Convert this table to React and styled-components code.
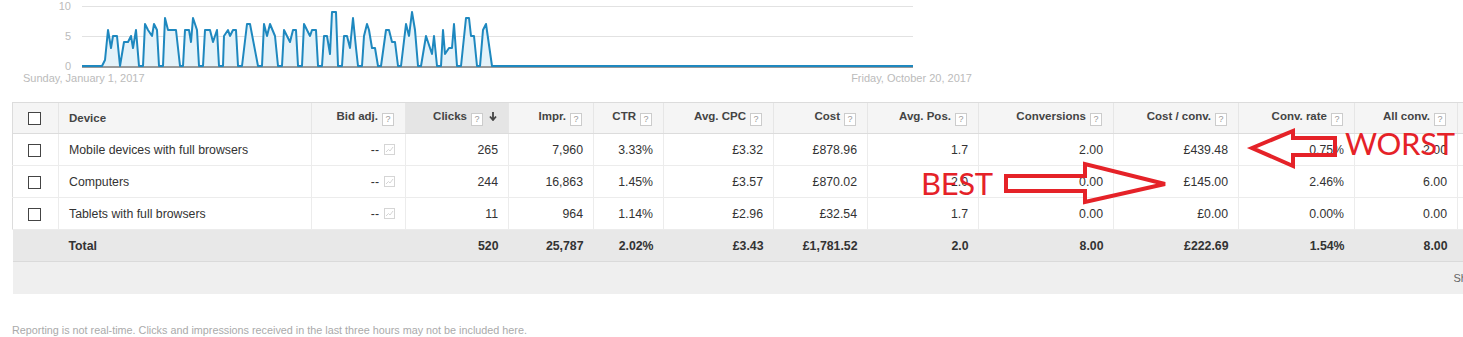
import React from 'react';
import styled, { createGlobalStyle } from 'styled-components';

const GlobalStyle = createGlobalStyle`
	html, body {
		margin: 0;
		padding: 0;
		background: #fff;
		overflow: hidden;
	}
	body {
		font-family: 'Liberation Sans', Arial, sans-serif;
		color: #333;
	}
`;

const Page = styled.div`
	position: relative;
	width: 1463px;
	min-height: 337px;
	display: flex;
	flex-direction: column;
	& > * {
		flex-shrink: 0;
	}
`;

const ChartSvg = styled.svg`
	display: block;
	width: 980px;
	height: 72px;
	& text {
		font-family: 'Liberation Sans', Arial, sans-serif;
		font-size: 11px;
		fill: #bbb;
	}
`;

const DateRow = styled.div`
	display: flex;
	justify-content: space-between;
	width: 949px;
	padding-left: 23px;
	font-size: 11px;
	line-height: 12px;
	color: #bbb;
`;

const Table = styled.table`
	margin: 18px 0 0 12px;
	border-collapse: collapse;
	table-layout: fixed;
	width: 1551px;
	font-size: 12.3px;
`;

const HeadCell = styled.th`
	height: 30px;
	padding: 0 11px 0 10px;
	background: ${props => (props.$sorted ? '#e5e5e5' : '#f5f5f5')};
	border-top: 1px solid #dcdcdc;
	border-bottom: 1px solid #dcdcdc;
	border-left: 1px solid #e6e6e6;
	text-align: ${props => props.$align || 'right'};
	font-size: 11.5px;
	font-weight: bold;
	color: #444;
	white-space: nowrap;
	&:first-child {
		border-left: 1px solid #dcdcdc;
		text-align: center;
		padding: 0;
	}
`;

const Help = styled.span`
	display: inline-block;
	width: 10px;
	height: 11px;
	margin-left: 4px;
	border: 1px solid #ccc;
	background: #fff;
	font-size: 9px;
	font-weight: normal;
	line-height: 11px;
	text-align: center;
	color: #999;
	vertical-align: -2px;
`;

const SortArrow = styled.svg`
	width: 8px;
	height: 9px;
	margin-left: 6px;
	vertical-align: -1px;
`;

const Cell = styled.td`
	height: 31px;
	padding: 0 10px;
	border-bottom: 1px solid #ececec;
	border-left: 1px solid #ececec;
	text-align: ${props => props.$align || 'right'};
	color: #333;
	white-space: nowrap;
	&:first-child {
		border-left: 1px solid #dcdcdc;
		text-align: center;
		padding: 0;
	}
`;

const TotalCell = styled.td`
	height: 31px;
	padding: 0 10px;
	background: #e8e8e8;
	border-bottom: 1px solid #dadada;
	text-align: ${props => props.$align || 'right'};
	font-weight: bold;
	color: #333;
	white-space: nowrap;
`;

const FooterCell = styled.td`
	height: 32px;
	padding: 0 0 0 1441px;
	background: #efefef;
	font-size: 11px;
	color: #666;
	white-space: nowrap;
	text-align: left;
`;

const Check = styled.span`
	display: inline-block;
	width: 11px;
	height: 11px;
	border: 1px solid #444;
	background: #fff;
	vertical-align: middle;
	margin-right: 3px;
`;

const BidIcon = styled.svg`
	width: 11px;
	height: 11px;
	margin-left: 5px;
	vertical-align: -1px;
`;

const Note = styled.div`
	margin: 30px 0 0 12px;
	font-size: 10.8px;
	color: #aaa;
`;

const Mark = styled.span`
	position: absolute;
	left: ${props => props.$x}px;
	top: ${props => props.$y}px;
	font-family: Lato, 'Liberation Sans', sans-serif;
	font-size: 31px;
	line-height: 1;
	color: #e52228;
	letter-spacing: -0.3px;
`;

const Overlay = styled.svg`
	position: absolute;
	left: 0;
	top: 0;
	width: 1463px;
	height: 337px;
	pointer-events: none;
`;

const points = [
	[82, 0], [102, 0], [105, 1], [108, 6], [111, 3], [113, 5], [117, 5], [120, 0], [124, 4], [128, 4],
	[131, 5], [133, 3], [136, 6], [139, 0], [143, 0], [145, 7], [148, 6], [152, 5], [154, 7], [157, 6],
	[159, 0], [163, 0], [165, 8], [168, 6], [176, 6], [180, 0], [183, 0], [185, 6], [189, 6], [191, 4],
	[193, 8], [197, 6], [199, 0], [203, 0], [205, 6], [210, 6], [213, 4], [217, 6], [219, 0], [223, 0],
	[224, 5], [228, 6], [230, 5], [233, 6], [236, 6], [238, 0], [242, 0], [247, 7], [250, 7], [258, 0],
	[262, 0], [264, 7], [267, 5], [270, 7], [275, 5], [278, 0], [282, 0], [284, 6], [287, 5], [290, 4],
	[293, 6], [296, 6], [298, 0], [302, 0], [304, 7], [307, 6], [310, 5], [312, 6], [316, 6], [318, 0],
	[322, 0], [324, 5], [327, 5], [330, 2], [332, 9], [336, 9], [338, 0], [342, 0], [344, 5], [347, 5],
	[350, 3], [353, 8], [356, 3], [358, 0], [362, 0], [364, 5], [367, 7], [369, 6], [372, 3], [375, 3],
	[378, 0], [381, 0], [386, 6], [389, 6], [392, 4], [395, 4], [398, 0], [401, 0], [406, 7], [409, 5],
	[412, 9], [415, 6], [418, 0], [421, 0], [426, 5], [430, 3], [432, 2], [434, 5], [437, 0], [441, 0],
	[443, 6], [445, 2], [449, 3], [452, 3], [454, 7], [457, 0], [461, 0], [466, 8], [469, 8], [471, 5],
	[474, 5], [477, 0], [480, 0], [483, 6], [486, 7], [492, 0], [913, 0],
];

const toY = v => 66 - v * 6;
const linePath = points.map(([x, v], i) => `${i ? 'L' : 'M'}${x},${toY(v)}`).join(' ');

const Chart = () => (
	<ChartSvg viewBox="0 0 980 72">
		<line x1="82" y1="6.5" x2="913" y2="6.5" stroke="#e2e2e2" />
		<line x1="82" y1="36.5" x2="913" y2="36.5" stroke="#e2e2e2" />
		<line x1="82" y1="67" x2="913" y2="67" stroke="#999" strokeWidth="2" />
		<text x="71" y="10" textAnchor="end">10</text>
		<text x="71" y="40" textAnchor="end">5</text>
		<text x="71" y="70" textAnchor="end">0</text>
		<path d={`${linePath} Z`} fill="#e4f2f9" />
		<path d={linePath} fill="none" stroke="#1e88bf" strokeWidth="2" strokeLinejoin="round" />
	</ChartSvg>
);

const columns = [
	{ label: '', width: 46 },
	{ label: 'Device', width: 253, align: 'left', help: false },
	{ label: 'Bid adj.', width: 94 },
	{ label: 'Clicks', width: 103, sorted: true },
	{ label: 'Impr.', width: 85 },
	{ label: 'CTR', width: 70 },
	{ label: 'Avg. CPC', width: 110 },
	{ label: 'Cost', width: 94 },
	{ label: 'Avg. Pos.', width: 111 },
	{ label: 'Conversions', width: 135 },
	{ label: 'Cost / conv.', width: 125 },
	{ label: 'Conv. rate', width: 116 },
	{ label: 'All conv.', width: 103 },
	{ label: '', width: 106 },
];

const rows = [
	['Mobile devices with full browsers', '265', '7,960', '3.33%', '£3.32', '£878.96', '1.7', '2.00', '£439.48', '0.75%', '2.00'],
	['Computers', '244', '16,863', '1.45%', '£3.57', '£870.02', '2.0', '0.00', '£145.00', '2.46%', '6.00'],
	['Tablets with full browsers', '11', '964', '1.14%', '£2.96', '£32.54', '1.7', '0.00', '£0.00', '0.00%', '0.00'],
];

const totals = ['520', '25,787', '2.02%', '£3.43', '£1,781.52', '2.0', '8.00', '£222.69', '1.54%', '8.00'];

const BidAdj = () => (
	<>
		--
		<BidIcon viewBox="0 0 11 11">
			<rect x="0.5" y="0.5" width="10" height="10" fill="none" stroke="#d5d5d5" />
			<polyline points="2,8 4.5,5.5 6,7 9,3" fill="none" stroke="#d5d5d5" />
		</BidIcon>
	</>
);

const App = () => (
	<Page>
		<GlobalStyle />
		<Chart />
		<DateRow>
			<span>Sunday, January 1, 2017</span>
			<span>Friday, October 20, 2017</span>
		</DateRow>
		<Table>
			<colgroup>
				{columns.map((c, i) => (
					<col key={i} style={{ width: c.width }} />
				))}
			</colgroup>
			<thead>
				<tr>
					{columns.map((c, i) => (
						<HeadCell key={i} $align={c.align} $sorted={c.sorted}>
							{i === 0 ? <Check /> : c.label}
							{c.label && c.help !== false ? <Help>?</Help> : null}
							{c.sorted ? (
								<SortArrow viewBox="0 0 8 9">
									<path d="M4 0 V7 M1 4.5 L4 8 L7 4.5" fill="none" stroke="#444" strokeWidth="1.8" />
								</SortArrow>
							) : null}
						</HeadCell>
					))}
				</tr>
			</thead>
			<tbody>
				{rows.map((r, ri) => (
					<tr key={ri}>
						<Cell>
							<Check />
						</Cell>
						<Cell $align="left">{r[0]}</Cell>
						<Cell>
							<BidAdj />
						</Cell>
						{r.slice(1).map((v, vi) => (
							<Cell key={vi}>{v}</Cell>
						))}
						<Cell />
					</tr>
				))}
				<tr>
					<TotalCell />
					<TotalCell $align="left">Total</TotalCell>
					<TotalCell />
					{totals.map((v, vi) => (
						<TotalCell key={vi}>{v}</TotalCell>
					))}
					<TotalCell />
				</tr>
				<tr>
					<FooterCell colSpan={14}>Show rows: 50 1 - 3 of 3</FooterCell>
				</tr>
			</tbody>
		</Table>
		<Note>Reporting is not real-time. Clicks and impressions received in the last three hours may not be included here.</Note>

		<Overlay viewBox="0 0 1463 337">
			<path
				d="M1252,148 L1293,131 L1293,138 L1335,138 L1335,155 L1293,155 L1293,166 Z"
				fill="none"
				stroke="#e52228"
				strokeWidth="4"
				strokeLinejoin="miter"
			/>
			<path
				d="M1165,184 L1085,164 L1085,176 L1006,176 L1006,191 L1085,191 L1085,202 Z"
				fill="none"
				stroke="#e52228"
				strokeWidth="4"
				strokeLinejoin="miter"
			/>
		</Overlay>
		<Mark $x={1345} $y={128}>WORST</Mark>
		<Mark $x={921} $y={168}>BEST</Mark>
	</Page>
);

export default App;
